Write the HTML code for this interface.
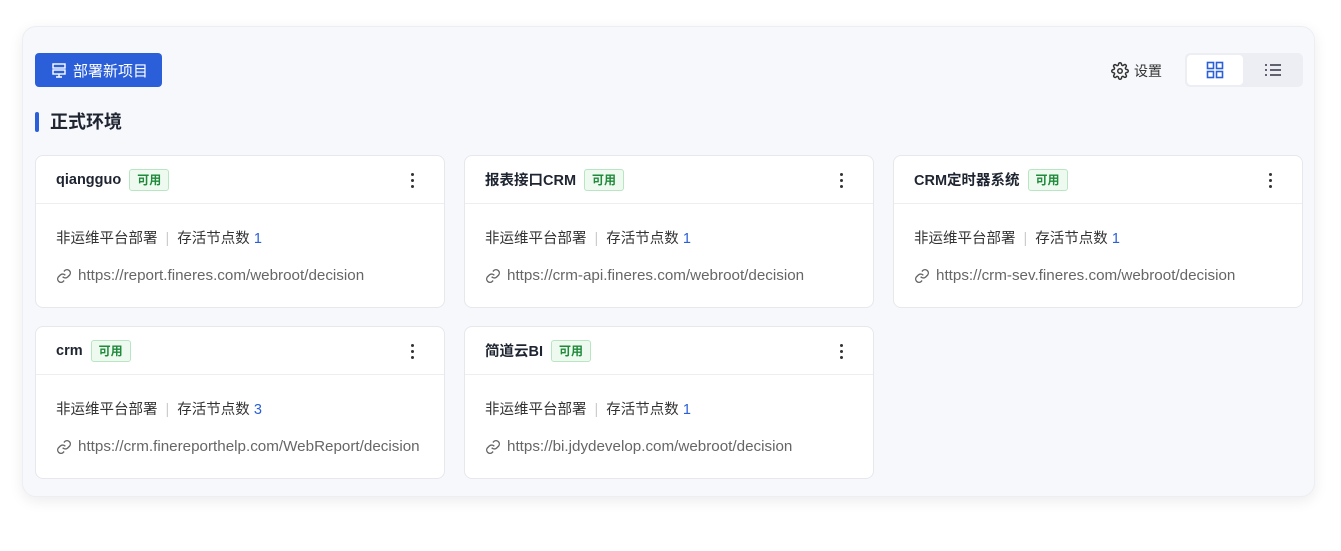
<!DOCTYPE html>
<html><head><meta charset="utf-8"><style>
*{box-sizing:border-box;margin:0;padding:0}
body{width:1341px;height:551px;background:#fff;font-family:"Liberation Sans","Noto Sans CJK SC",sans-serif;position:relative;overflow:hidden}
.panel{position:absolute;left:22px;top:26px;width:1293px;height:471px;background:#f7f8fc;border-radius:14px;box-shadow:0 4px 14px rgba(0,0,0,.08);border:1px solid #eceef3}
.btn{position:absolute;left:35px;top:53px;width:127px;height:34px;background:#2b5fd9;border-radius:4px;color:#fff;font-size:15px;display:flex;align-items:center;padding-left:16px}
.btn svg{margin-right:6px}
.title{position:absolute;left:35px;top:112px;height:20px;font-size:18px;font-weight:bold;color:#1e2430;padding-left:15px;line-height:20px}
.title:before{content:"";position:absolute;left:0;top:0;width:4px;height:20px;background:#2b5fd9;border-radius:2px}
.set{position:absolute;left:1111px;top:61px;font-size:14px;color:#333;display:flex;align-items:center;gap:5px}
.tog{position:absolute;left:1185px;top:53px;width:118px;height:34px;background:#eceef3;border-radius:5px}
.tog .a{position:absolute;left:2px;top:2px;width:56px;height:30px;background:#fff;border-radius:4px;display:flex;align-items:center;justify-content:center}
.tog .b{position:absolute;left:60px;top:2px;width:56px;height:30px;display:flex;align-items:center;justify-content:center}
.card{position:absolute;width:410px;height:153px;background:#fff;border:1px solid #e6e8ee;border-radius:8px}
.hd{height:48px;border-bottom:1px solid #eceef2;display:flex;align-items:center;padding-left:20px;font-size:14.5px;font-weight:bold;color:#1e2430;position:relative}
.tag{margin-left:8px;font-size:12px;color:#1f8a3a;background:#eefaf0;border:1px solid #b8e6c2;border-radius:3px;padding:2px 7px;font-weight:bold;line-height:16px}
.dots{position:absolute;right:30px;top:17px;width:3px}
.dots i{display:block;width:3px;height:3px;background:#333;border-radius:50%;margin-bottom:3px}
.l1{position:absolute;left:20px;top:71px;font-size:14.5px;color:#333}
.l1 .sep{color:#ccc;margin:0 8px}
.l1 b{font-weight:normal;color:#2b5fd9}
.l2{position:absolute;left:20px;top:111px;font-size:15.2px;color:#666;display:flex;align-items:center;gap:6px}
</style></head><body>
<div class="panel"></div>
<div class="btn"><svg width="16" height="16" viewBox="0 0 16 16" fill="none" stroke="#fff" stroke-width="1.4"><rect x="2" y="2" width="12" height="4"/><rect x="2" y="8" width="12" height="4"/><path d="M8 12v3M5 15h6"/></svg>部署新项目</div>
<div class="title">正式环境</div>
<div class="set"><svg width="18" height="18" viewBox="0 0 24 24" fill="none" stroke="#333" stroke-width="2"><circle cx="12" cy="12" r="3"/><path d="M19.4 15a1.7 1.7 0 0 0 .3 1.8l.1.1a2 2 0 1 1-2.8 2.8l-.1-.1a1.7 1.7 0 0 0-1.8-.3 1.7 1.7 0 0 0-1 1.5V21a2 2 0 1 1-4 0v-.1a1.7 1.7 0 0 0-1.1-1.5 1.7 1.7 0 0 0-1.8.3l-.1.1a2 2 0 1 1-2.8-2.8l.1-.1a1.7 1.7 0 0 0 .3-1.8 1.7 1.7 0 0 0-1.5-1H3a2 2 0 1 1 0-4h.1a1.7 1.7 0 0 0 1.5-1.1 1.7 1.7 0 0 0-.3-1.8l-.1-.1a2 2 0 1 1 2.8-2.8l.1.1a1.7 1.7 0 0 0 1.8.3H9a1.7 1.7 0 0 0 1-1.5V3a2 2 0 1 1 4 0v.1a1.7 1.7 0 0 0 1 1.5 1.7 1.7 0 0 0 1.8-.3l.1-.1a2 2 0 1 1 2.8 2.8l-.1.1a1.7 1.7 0 0 0-.3 1.8V9a1.7 1.7 0 0 0 1.5 1H21a2 2 0 1 1 0 4h-.1a1.7 1.7 0 0 0-1.5 1z"/></svg>设置</div>
<div class="tog"><div class="a"><svg width="18" height="18" viewBox="0 0 18 18" fill="none" stroke="#2b5fd9" stroke-width="1.6"><rect x="1.5" y="1.5" width="6" height="6"/><rect x="10.5" y="1.5" width="6" height="6"/><rect x="1.5" y="10.5" width="6" height="6"/><rect x="10.5" y="10.5" width="6" height="6"/></svg></div>
<div class="b"><svg width="18" height="16" viewBox="0 0 18 16" stroke="#334" stroke-width="1.6"><path d="M1 3h2M6 3h11M1 8h2M6 8h11M1 13h2M6 13h11"/></svg></div></div>

<div class="card" style="left:35px;top:155px"><div class="hd">qiangguo<span class="tag">可用</span><div class="dots"><i></i><i></i><i></i></div></div><div class="l1">非运维平台部署<span class="sep">|</span>存活节点数 <b>1</b></div><div class="l2"><svg width="16" height="16" viewBox="0 0 24 24" fill="none" stroke="#666" stroke-width="2"><path d="M10 13a5 5 0 0 0 7.5.5l3-3a5 5 0 0 0-7-7l-1.7 1.7"/><path d="M14 11a5 5 0 0 0-7.5-.5l-3 3a5 5 0 0 0 7 7l1.7-1.7"/></svg>https://report.fineres.com/webroot/decision</div></div>
<div class="card" style="left:464px;top:155px"><div class="hd">报表接口CRM<span class="tag">可用</span><div class="dots"><i></i><i></i><i></i></div></div><div class="l1">非运维平台部署<span class="sep">|</span>存活节点数 <b>1</b></div><div class="l2"><svg width="16" height="16" viewBox="0 0 24 24" fill="none" stroke="#666" stroke-width="2"><path d="M10 13a5 5 0 0 0 7.5.5l3-3a5 5 0 0 0-7-7l-1.7 1.7"/><path d="M14 11a5 5 0 0 0-7.5-.5l-3 3a5 5 0 0 0 7 7l1.7-1.7"/></svg>https://crm-api.fineres.com/webroot/decision</div></div>
<div class="card" style="left:893px;top:155px"><div class="hd">CRM定时器系统<span class="tag">可用</span><div class="dots"><i></i><i></i><i></i></div></div><div class="l1">非运维平台部署<span class="sep">|</span>存活节点数 <b>1</b></div><div class="l2"><svg width="16" height="16" viewBox="0 0 24 24" fill="none" stroke="#666" stroke-width="2"><path d="M10 13a5 5 0 0 0 7.5.5l3-3a5 5 0 0 0-7-7l-1.7 1.7"/><path d="M14 11a5 5 0 0 0-7.5-.5l-3 3a5 5 0 0 0 7 7l1.7-1.7"/></svg>https://crm-sev.fineres.com/webroot/decision</div></div>
<div class="card" style="left:35px;top:326px"><div class="hd">crm<span class="tag">可用</span><div class="dots"><i></i><i></i><i></i></div></div><div class="l1">非运维平台部署<span class="sep">|</span>存活节点数 <b>3</b></div><div class="l2"><svg width="16" height="16" viewBox="0 0 24 24" fill="none" stroke="#666" stroke-width="2"><path d="M10 13a5 5 0 0 0 7.5.5l3-3a5 5 0 0 0-7-7l-1.7 1.7"/><path d="M14 11a5 5 0 0 0-7.5-.5l-3 3a5 5 0 0 0 7 7l1.7-1.7"/></svg>https://crm.finereporthelp.com/WebReport/decision</div></div>
<div class="card" style="left:464px;top:326px"><div class="hd">简道云BI<span class="tag">可用</span><div class="dots"><i></i><i></i><i></i></div></div><div class="l1">非运维平台部署<span class="sep">|</span>存活节点数 <b>1</b></div><div class="l2"><svg width="16" height="16" viewBox="0 0 24 24" fill="none" stroke="#666" stroke-width="2"><path d="M10 13a5 5 0 0 0 7.5.5l3-3a5 5 0 0 0-7-7l-1.7 1.7"/><path d="M14 11a5 5 0 0 0-7.5-.5l-3 3a5 5 0 0 0 7 7l1.7-1.7"/></svg>https://bi.jdydevelop.com/webroot/decision</div></div>
</body></html>
